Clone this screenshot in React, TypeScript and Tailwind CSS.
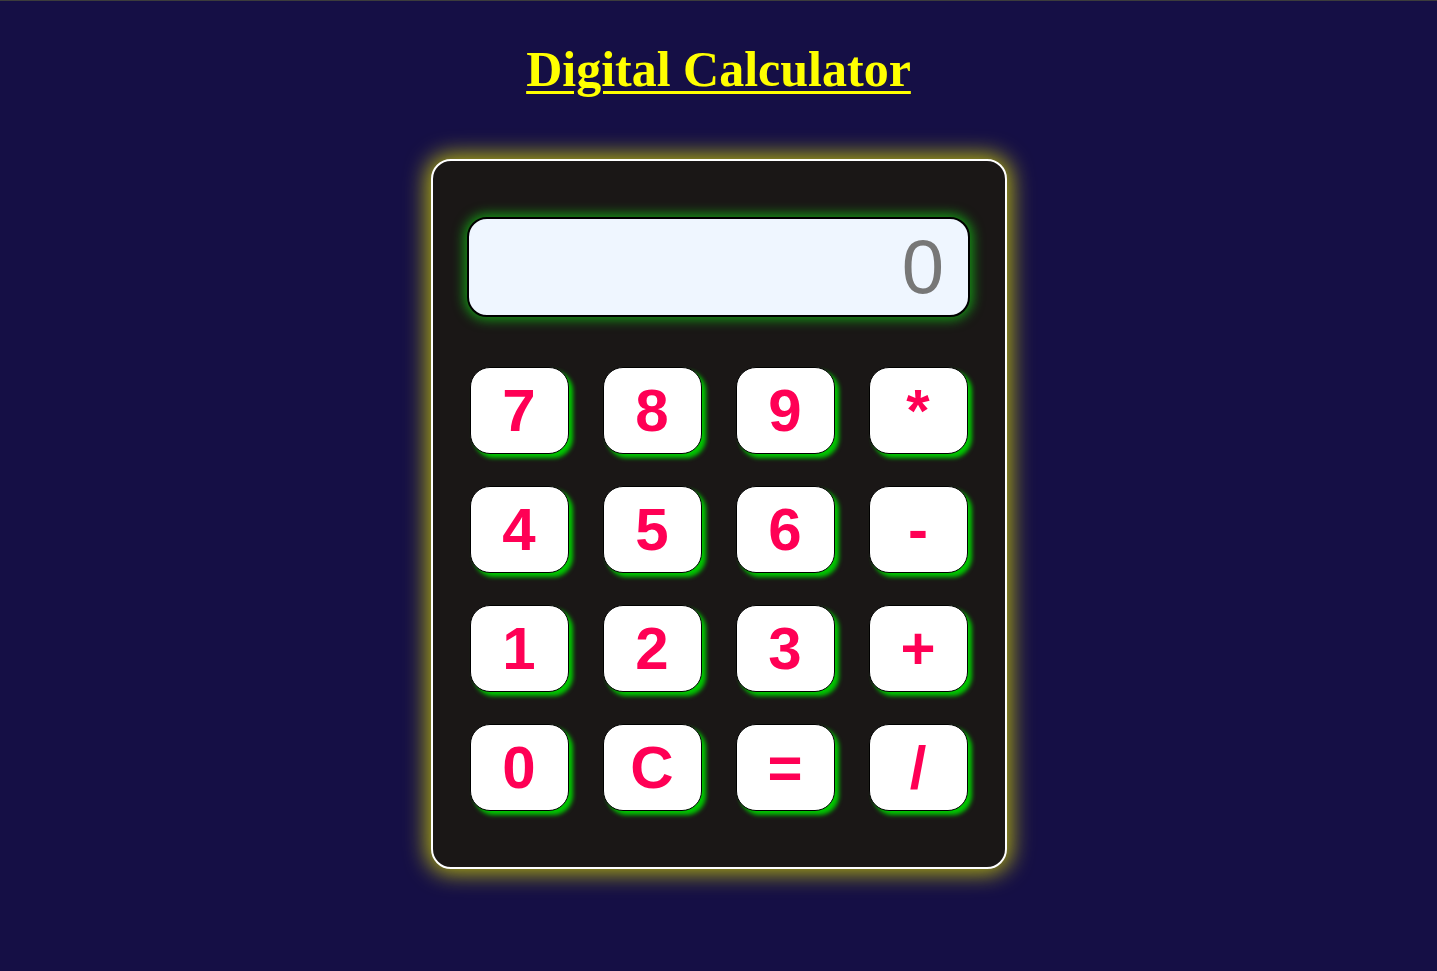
import React, { useState } from "react";

const KEYS = ["7", "8", "9", "*", "4", "5", "6", "-", "1", "2", "3", "+", "0", "C", "=", "/"];

export default function App() {
  const [value, setValue] = useState("0");

  const press = (k: string) => {
    if (k === "C") return setValue("0");
    if (k === "=") {
      try {
        // eslint-disable-next-line no-new-func
        const r = Function(`return (${value})`)();
        setValue(String(r));
      } catch {
        setValue("Error");
      }
      return;
    }
    setValue((v) => (v === "0" || v === "Error" ? k : v + k));
  };

  return (
    <div className="min-h-[971px] w-full bg-[#150f45] border-t border-[#3c3c3c] flex flex-col items-center">
      {/* Title */}
      <h1 className="mt-[38px] text-[50px] leading-[60px] font-bold text-[#ffff00] underline decoration-[3px] underline-offset-[5px] [font-family:'Liberation_Serif',serif]">
        Digital Calculator
      </h1>

      {/* Calculator body */}
      <div className="mt-[60px] w-[576px] h-[710px] rounded-[20px] border-2 border-white bg-[#1a1716] shadow-[0_0_22px_4px_rgba(220,220,0,0.8)] flex flex-col items-center pt-[56px]">
        {/* Display */}
        <div className="w-[503px] h-[100px] rounded-[20px] border-2 border-black bg-[#eff6ff] shadow-[0_0_12px_3px_rgba(20,170,20,0.85)] flex items-center justify-end pr-[24px]">
          <span className="text-[76px] leading-none text-[#777777] [font-family:'Liberation_Sans',Arial,sans-serif]">
            {value}
          </span>
        </div>

        {/* Keypad */}
        <div className="mt-[50px] grid grid-cols-[repeat(4,99px)] gap-x-[34px] gap-y-[32px]">
          {KEYS.map((k) => (
            <button
              key={k}
              onClick={() => press(k)}
              className="h-[87px] w-[99px] rounded-[20px] border border-black bg-white shadow-[4px_4px_4px_#00c800] flex items-center justify-center text-[60px] font-bold leading-none text-[#ff0055] [font-family:'Liberation_Sans',Arial,sans-serif]"
            >
              {k}
            </button>
          ))}
        </div>
      </div>
    </div>
  );
}
